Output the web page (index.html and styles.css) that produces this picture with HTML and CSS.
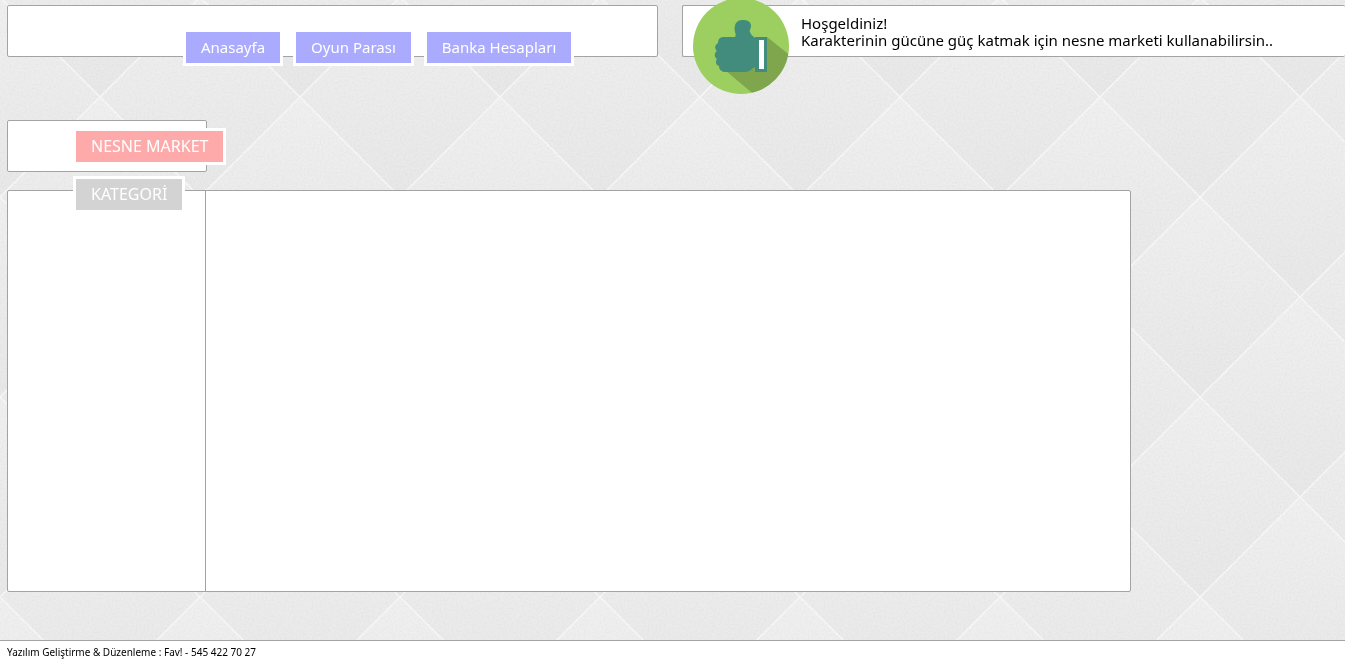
FILE: index.html
```
<!DOCTYPE html>
<html lang="tr">
<head>
  <meta charset="UTF-8">
  <meta name="viewport" content="width=device-width, initial-scale=1.0">
  <title>Nesne Market</title>
  <link rel="stylesheet" href="styles.css">
</head>
<body>

  <svg class="backdrop" aria-hidden="true">
    <defs>
      <linearGradient id="shade" x1="0" y1="0" x2="0" y2="1">
        <stop offset="0" stop-color="#f0f0f0"/>
        <stop offset="1" stop-color="#e8e8e8"/>
      </linearGradient>
      <pattern id="diamonds" width="200" height="200" y="-3" patternUnits="userSpaceOnUse">
        <g fill="url(#shade)">
          <path d="M100 -100 L200 0 L100 100 L0 0 Z"/>
          <path d="M100 100 L200 200 L100 300 L0 200 Z"/>
          <path d="M0 0 L100 100 L0 200 L-100 100 Z"/>
          <path d="M200 0 L300 100 L200 200 L100 100 Z"/>
        </g>
        <path d="M-5 -5 L205 205 M-5 205 L205 -5" stroke="#f8f8f8" stroke-width="1.5"/>
      </pattern>
      <filter id="grain" x="0" y="0" width="100%" height="100%">
        <feTurbulence type="fractalNoise" baseFrequency="0.5" numOctaves="2"/>
        <feColorMatrix values="0 0 0 0 0  0 0 0 0 0  0 0 0 0 0  0.06 0 0 0 -0.022"/>
      </filter>
    </defs>
    <rect width="100%" height="100%" fill="url(#diamonds)"/>
    <rect width="100%" height="100%" filter="url(#grain)"/>
  </svg>

  <div class="page">
    <header class="header">
      <nav class="panel menu">
        <a class="tag blue" href="#">Anasayfa</a>
        <a class="tag blue" href="#">Oyun Parası</a>
        <a class="tag blue" href="#">Banka Hesapları</a>
      </nav>
      <div class="panel welcome">
        <svg class="thumb" viewBox="0 0 96 96" aria-hidden="true">
          <circle cx="48" cy="48" r="48" fill="#9ccf60"/>
          <path d="M74 39 L95.300 56 A48 48 0 0 1 59 94.700 L33 73 L62 60 Z" fill="#7fa54d"/>
          <path d="M50 22 C55 22 58 24 58 28 C58 31 56 32 57 34 C58 37 60 38 62 40 V69 C59 70 58 73 53 74 H33 C29 74 26 72 26 68 C23 67 22 64 24 61 C21 59 21 55 24 53 C21 50 22 47 25 45 C25 41 27 39 31 39 H41 C43 39 43 37 42 34 C41 30 41 22 50 22 Z" fill="#428c7d"/>
          <path d="M62 39 H74 V74 H62 Z" fill="#428c7d"/>
          <path d="M66 42 H71 V71 H66 Z" fill="#fff"/>
        </svg>
        <p>Hoşgeldiniz!<br>Karakterinin gücüne güç katmak için nesne marketi kullanabilirsin..</p>
      </div>
    </header>

    <div class="panel title">
      <h1 class="tag red">NESNE MARKET</h1>
    </div>

    <main class="panel market">
      <aside class="sidebar">
        <h2 class="tag gray">KATEGORİ</h2>
      </aside>
      <section class="items"></section>
    </main>
  </div>

  <footer class="footer">Yazılım Geliştirme &amp; Düzenleme : Fav! - 545 422 70 27</footer>

</body>
</html>
```
FILE: styles.css
```
* {
  box-sizing: border-box;
}
body {
  margin: 0;
  min-height: 100vh;
  display: flex;
  flex-direction: column;
  overflow-x: hidden;
  font-family: "Noto Sans", sans-serif;
  font-size: 15px;
  line-height: 17px;
  color: #000;
  background-color: #eaeaea;
}
.backdrop {
  position: fixed;
  top: 0;
  left: 0;
  width: 100%;
  height: 100%;
  z-index: -1;
}
.page {
  padding: 5px 0 48px 7px;
}
.panel {
  background-color: #fff;
  border: 1px solid #a3a3a3;
  border-radius: 2px;
}
.header {
  display: flex;
  gap: 24px;
}
.menu {
  width: 651px;
  height: 52px;
  padding: 23px 0 0 175px;
  display: flex;
  align-items: flex-start;
  gap: 10px;
}
.welcome {
  flex: 1;
  height: 52px;
  display: flex;
  align-items: flex-start;
  gap: 12px;
  padding-left: 10px;
  border-right: 0;
  white-space: nowrap;
}
.welcome p {
  margin: 9px 0 0;
}
.thumb {
  flex: none;
  width: 96px;
  height: 96px;
  margin-top: -8px;
}
.tag {
  margin: 0;
  padding: 7px 15px;
  border: 3px solid #fff;
  color: #fff;
  font-weight: normal;
  text-decoration: none;
  white-space: nowrap;
}
.blue {
  background-color: #aaf;
  font-size: 15px;
}
.red {
  background-color: #faa;
  font-size: 16px;
}
.gray {
  background-color: #d3d3d3;
  font-size: 16px;
}
.title {
  width: 200px;
  height: 52px;
  margin-top: 63px;
  padding: 7px 0 0 65px;
  display: flex;
  align-items: flex-start;
}
.market {
  width: 84%;
  min-height: 402px;
  margin-top: 18px;
  display: flex;
}
.sidebar {
  width: 198px;
  padding-left: 65px;
  border-right: 1px solid #a3a3a3;
  display: flex;
  align-items: flex-start;
}
.sidebar .tag {
  margin-top: -15px;
}
.items {
  flex: 1;
}
.footer {
  margin-top: auto;
  padding: 5px 7px 4px;
  border-top: 1px solid #a3a3a3;
  background-color: #fff;
  font-size: 10px;
  line-height: 13px;
}
```
